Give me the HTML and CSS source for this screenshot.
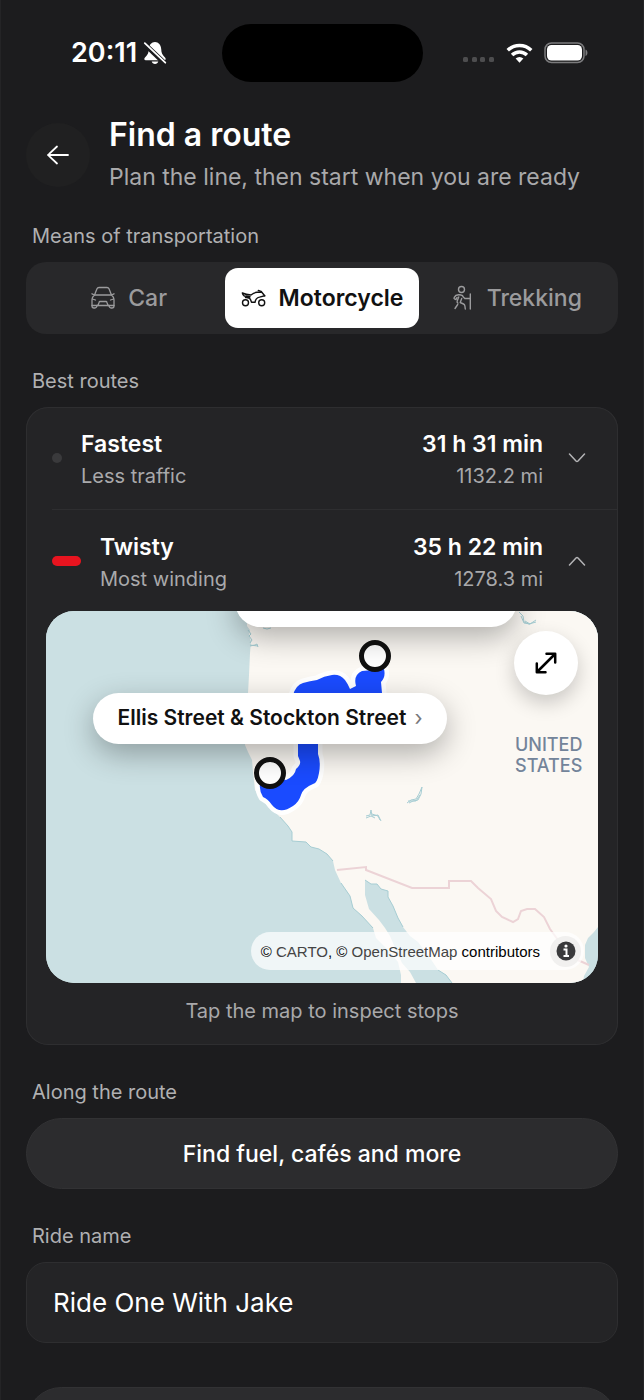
FILE: index.html
```html
<!DOCTYPE html>
<html lang="en">

<head>
    <meta charset="UTF-8">
    <meta name="viewport" content="width=device-width, initial-scale=1.0">
    <title>Find a route</title>
    <link rel="stylesheet" href="styles.css">
</head>

<body>

    <!-- Status bar -->
    <div class="status-bar">
        <div class="status-time">
            <span>20:11</span>
            <svg width="24" height="24" viewBox="0 0 24 24" fill="#fff">
                <path d="M12 1C8.500 1 6 4 5.800 8c-.2 4-1 5.800-3.800 8.500-1 1-1 2.800.8 2.800h18.400c1.800 0 1.800-1.800.8-2.800C19.200 13.800 18.400 12 18.200 8 18 4 15.500 1 12 1z" />
                <path d="M8.700 20.600h6.600c-.4 1.600-1.700 2.500-3.300 2.500s-2.900-.9-3.300-2.500z" />
                <path d="M1 2.500 22 22.500" stroke="#1c1c1e" stroke-width="5" />
                <path d="M1.800 2.200 22.300 21.700" stroke="#fff" stroke-width="1.800" stroke-linecap="round" />
            </svg>
        </div>
        <div class="island"></div>
        <div class="status-icons">
            <svg width="32" height="6" viewBox="0 0 32 6" fill="#4d4d4f">
                <rect width="5" height="5" rx="1.500" />
                <rect x="9" width="5" height="5" rx="1.500" />
                <rect x="17" width="5" height="5" rx="1.500" />
                <rect x="26" width="5" height="5" rx="1.500" />
            </svg>
            <svg width="27" height="20" viewBox="0 0 28 20" fill="none" stroke="#fff" stroke-width="3.600">
                <path d="M1.800 7.200a17.500 17.500 0 0 1 24.400 0" />
                <path d="M6.300 12.100a11 11 0 0 1 15.400 0" />
                <path d="M14 20l-4-4.200a5.800 5.800 0 0 1 8 0z" fill="#fff" stroke="none" />
            </svg>
            <svg width="44" height="22" viewBox="0 0 44 22">
                <rect x="1" y="1" width="39" height="19.500" rx="6.500" fill="none" stroke="#7b7b7d" stroke-width="1.500" />
                <rect x="3" y="3" width="35" height="15.500" rx="4.500" fill="#fff" />
                <path d="M41.500 7.500c2.600 1 2.600 5.500 0 6.500z" fill="#7b7b7d" />
            </svg>
        </div>
    </div>

    <!-- Page header -->
    <header class="page-header">
        <button class="back-btn" type="button" aria-label="Back">
            <svg width="24" height="24" viewBox="0 0 24 24" fill="none" stroke="#fff" stroke-width="1.800" stroke-linecap="round" stroke-linejoin="round">
                <path d="M22 12H2M11 3.500 3.200 10.800q-1.300 1.200 0 2.400L11 20.500" />
            </svg>
        </button>
        <div>
            <h1>Find a route</h1>
            <p>Plan the line, then start when you are ready</p>
        </div>
    </header>

    <main>
        <section>
            <h2>Means of transportation</h2>
            <div class="segmented">
                <button class="segment" type="button">
                    <svg width="26" height="26" viewBox="0 0 26 26" fill="none" stroke="currentColor" stroke-width="1.300" stroke-linejoin="round" stroke-linecap="round">
                        <path d="M4.500 10 7 3.800Q7.500 2.500 9 2.500h8q1.500 0 2 1.300L21.500 10" />
                        <path d="M2 8.800 4.500 10h17l2.500-1.200M4.500 10C2.500 11.500 2 13 2 15v6q0 2 2 2h1q1.600 0 2-2.500h12q.4 2.500 2 2.500h1q2 0 2-2v-6c0-2-.5-3.500-2.500-5" />
                        <path d="M2.300 14 5.500 15M23.700 14l-3.200 1M2 20.500h6l1-3Q9.300 16.500 10 16.500h6q.700 0 1 1l1 3h6" />
                    </svg>
                    Car
                </button>
                <button class="segment active" type="button" aria-pressed="true">
                    <svg width="26" height="26" viewBox="0 0 26 26" fill="none" stroke="currentColor" stroke-width="1.400" stroke-linejoin="round" stroke-linecap="round">
                        <circle cx="4.500" cy="17.700" r="3" />
                        <circle cx="20.700" cy="17.700" r="3" />
                        <path d="M1.300 8Q5 9.800 10 10q3-2.500 6-2.700h4.500M1.300 8q.4 2.300 2 3l5.700.8M4.500 12.500q4-.3 5 2l1 2.800H14q.5-4.300 4.500-5.200l5.200-1.300" />
                        <path d="M17.300 5.500 20 6.300l3.700 4.500" />
                    </svg>
                    Motorcycle
                </button>
                <button class="segment" type="button">
                    <svg width="26" height="26" viewBox="0 0 26 26" fill="none" stroke="currentColor" stroke-width="1.400" stroke-linejoin="round" stroke-linecap="round">
                        <circle cx="12.500" cy="4.500" r="3" />
                        <path d="m8 12.500-1 2-1.500-.7q-.8-.5-.3-1.300L7 10.300q2.500-1 5-.3 1.800.4 2.300 2l1.500 1.500h5.500" />
                        <path d="m12.700 13.500-1.500 4 3.300 1.500q1.200.6 1.400 2l.4 3M9.700 12l-1.500 4q-.5 1.500.7 2.200M8.700 19.500 6 23.500M21.300 9v15" />
                    </svg>
                    Trekking
                </button>
            </div>
        </section>

        <section>
            <h2>Best routes</h2>
            <div class="routes">
                <button class="route" type="button" aria-expanded="false">
                    <span class="marker"></span>
                    <span class="route-name"><strong>Fastest</strong><span>Less traffic</span></span>
                    <span class="route-stats"><strong>31 h 31 min</strong><span>1132.2 mi</span></span>
                    <svg width="18" height="10" viewBox="0 0 18 10" fill="none" stroke="#b4b4b6" stroke-width="1.500" stroke-linecap="round" stroke-linejoin="round">
                        <path d="m1.500 1 6.500 7q1 .8 2 0l6.500-7" />
                    </svg>
                </button>
                <button class="route selected" type="button" aria-expanded="true">
                    <span class="marker"></span>
                    <span class="route-name"><strong>Twisty</strong><span>Most winding</span></span>
                    <span class="route-stats"><strong>35 h 22 min</strong><span>1278.3 mi</span></span>
                    <svg width="18" height="10" viewBox="0 0 18 10" fill="none" stroke="#b4b4b6" stroke-width="1.500" stroke-linecap="round" stroke-linejoin="round">
                        <path d="m1.500 9 6.500-7q1-.8 2 0l6.500 7" />
                    </svg>
                </button>

                <!-- Route map -->
                <div class="map">
                    <svg class="map-canvas" viewBox="46 611 552 372" preserveAspectRatio="xMidYMid slice">
                        <rect x="46" y="611" width="552" height="372" fill="#cbe0e3" />
                        <path class="land" d="M247 611V626L250 630 249 636 251 641 250 653 249 675 248 693 245 745 248 752 252 760 253 772 255 790 262 800 275 812 280 817 288 826 292 832V841L306 842 311 847 319 849 327 854 333 861 335 870 341 883 350 896 353 908 362 916 373 928 376 938 388 950 398 962 401 975V983H416L410 972 402 963 396 950 390 936 385 928 379 920 369 909 365 895V880L371 884 377 884 381 889 388 891V897L393 906 398 918 403 927 410 936 418 942 430 958 438 970 446 975 452 983H583L584 976 589 967 585 958V945L588 938 594 932 598 927V611z" />
                        <g class="water">
                            <path d="M248 630l3 4-2 2 3 4-2 3M250 646l5-1 2-1 1 3M250 645l8 1M263 628l4 1 4-1" />
                            <path d="M519 612l4 4 1 6 5 2 7-2M521 616l3 7 6 1 6-4M525 621l5 3" />
                            <path d="M407 803l4-3 5-1 3-5 3-7-1 7-3 6-5 1-4 2M408 801l8 0 4-6" />
                            <path d="M366 816l4-1 1-5 1 6 6-1 3 6M366 818l5-2 4 2M372 814l6 2 2 4" />
                            <path d="M280 817 288 826 292 832V841L306 842 311 847 319 849 327 854 333 861M365 880L371 884 377 884 381 889 388 891V897L393 906 398 918 403 927M438 970L446 975 452 983M341 883L350 896 353 908 362 916 373 928" />
                        </g>
                        <path class="border-line" d="M337 870l29-3v3l46 18h37v-7h22l7 7 13 11 5 12 6 6 11 5 5-3 3-8 6-2h8l9 8 6 12 8 11 7 16 15 5 9 4" />
                        <path class="ride" d="M293 695Q296 685 303 683T317 680Q324 676 332 675T345 680Q348 684 350 689L356 686Q353 675 362 671L384 669Q386 677 381 682L382 693 381 703 318 711V754Q321 762 319 773T313 784Q303 788 301 795T293 806Q280 815 272 805 268 799 263 797 259 790 260 784V773L286 780Q295 776 296 769 301 765 300 761L298 756V720z" />
                        <g class="pins">
                            <circle cx="375" cy="656" r="13.500" />
                            <circle cx="270" cy="773" r="13.500" />
                        </g>
                    </svg>
                    <span class="country">UNITED STATES</span>
                    <span class="stop stop-end"></span>
                    <button class="stop stop-start" type="button">Ellis Street &amp; Stockton Street <span class="caret">›</span></button>
                    <button class="expand-btn" type="button" aria-label="Expand map">
                        <svg width="22" height="22" viewBox="0 0 22 22" fill="none" stroke="#000" stroke-width="2.500" stroke-linecap="round" stroke-linejoin="round">
                            <path d="M11.500 1.800h8.700v8.700M20 2 2 20M10.500 20.200H1.800v-8.700" />
                        </svg>
                    </button>
                    <div class="attribution">
                        <span>© <a href="#">CARTO</a>, © <a href="#">OpenStreetMap</a> contributors</span>
                        <button class="info-btn" type="button" aria-label="Attribution">
                            <svg width="20" height="20" viewBox="0 0 20 20">
                                <circle cx="10" cy="10" r="9.500" fill="#3a3a3c" />
                                <path d="M7.500 8.500h3V15M7.500 15h5.500" fill="none" stroke="#fff" stroke-width="2" />
                                <circle cx="10" cy="5" r="1.600" fill="#fff" />
                            </svg>
                        </button>
                    </div>
                </div>
                <p class="hint">Tap the map to inspect stops</p>
            </div>
        </section>

        <section>
            <h2>Along the route</h2>
            <button class="pill-btn" type="button">Find fuel, cafés and more</button>
        </section>

        <section>
            <label for="rideName">Ride name</label>
            <input id="rideName" type="text" value="Ride One With Jake">
        </section>

        <button class="pill-btn save-btn" type="button" aria-label="Save"></button>
    </main>

</body>

</html>
```
FILE: styles.css
```css
/* Reset */
* {
    box-sizing: border-box;
    margin: 0;
    padding: 0;
}

body {
    height: 100vh;
    overflow: hidden;
    font-family: 'Inter', sans-serif;
    background-color: #1c1c1e;
    color: #fff;
    border-left: 1px solid #242426;
    border-right: 1px solid #242426;
}

button,
input {
    font-family: inherit;
    color: inherit;
    border: none;
    background: none;
}

button {
    cursor: pointer;
}

svg {
    display: block;
    flex-shrink: 0;
}

/* Status bar */
.status-bar {
    display: grid;
    grid-template-columns: 1fr 201px 1fr;
    align-items: center;
    height: 105px;
}

.status-time {
    display: flex;
    align-items: center;
    gap: 6px;
    padding-left: 70px;
    font-size: 27px;
    font-weight: 600;
}

.island {
    height: 58px;
    border-radius: 29px;
    background: #000;
}

.status-icons {
    display: flex;
    align-items: center;
    justify-content: flex-end;
    gap: 11px;
    padding-right: 55px;
}

.status-icons svg:first-child {
    margin-top: 14px;
}

/* Header */
.page-header {
    display: flex;
    align-items: center;
    gap: 19px;
    padding: 8px 25px 11px;
}

.back-btn {
    display: flex;
    align-items: center;
    justify-content: center;
    width: 64px;
    height: 64px;
    border-radius: 50%;
    background: #202021;
}

h1 {
    font-size: 32px;
    line-height: 44px;
    font-weight: 600;
}

.page-header p {
    font-size: 23px;
    line-height: 40px;
    color: #a9a9ab;
}

/* Sections */
main {
    display: flex;
    flex-direction: column;
    gap: 35px;
    padding: 16px 25px 0;
}

h2,
label {
    display: block;
    margin: 0 6px 14px;
    font-size: 20px;
    line-height: 24px;
    font-weight: 400;
    color: #b0b0b2;
}

/* Transport switch */
.segmented {
    display: grid;
    grid-template-columns: repeat(3, 1fr);
    padding: 6px;
    border-radius: 20px;
    background: #28282a;
}

.segment {
    display: flex;
    align-items: center;
    justify-content: center;
    gap: 12px;
    height: 60px;
    border-radius: 13px;
    font-size: 23px;
    font-weight: 500;
    color: #9b9b9d;
}

.segment.active {
    background: #fff;
    color: #111;
    font-weight: 600;
}

/* Routes card */
.routes {
    border-radius: 22px;
    background: #242426;
    box-shadow: inset 0 0 0 1px #2e2e30;
}

.route {
    display: flex;
    align-items: center;
    width: calc(100% - 26px);
    height: 102px;
    margin-left: 26px;
    padding-right: 32px;
    text-align: left;
}

.route + .route {
    border-top: 1px solid #2e2e30;
}

.marker {
    width: 10px;
    height: 10px;
    margin-right: 19px;
    border-radius: 5px;
    background: #3a3a3c;
}

.selected .marker {
    width: 29px;
    background: #e8141f;
}

.route-name,
.route-stats {
    display: flex;
    flex-direction: column;
    padding-top: 4px;
    font-size: 20px;
    line-height: 32px;
    color: #a9a9ab;
}

.route-name {
    flex: 1;
}

.route-stats {
    margin-right: 25px;
    text-align: right;
}

.route strong {
    font-size: 23px;
    font-weight: 600;
    color: #fff;
}

/* Map */
.map {
    position: relative;
    height: 372px;
    margin: 0 20px;
    border-radius: 28px;
    overflow: hidden;
    background: #cbe0e3;
    color: #111;
}

.map-canvas {
    width: 100%;
    height: 100%;
}

.land {
    fill: #fbf8f3;
}

.water {
    fill: none;
    stroke: #a6cdd3;
    stroke-width: 1;
}

.border-line {
    fill: none;
    stroke: #ecd3d6;
    stroke-width: 2;
}

.ride {
    fill: #1a4bff;
    stroke: #fff;
    stroke-width: 9;
    stroke-linejoin: round;
    paint-order: stroke;
}

.pins {
    fill: #fff;
    stroke: #111;
    stroke-width: 5;
}

.country {
    position: absolute;
    top: 123px;
    right: 15px;
    width: 68px;
    font-size: 18px;
    line-height: 21px;
    font-weight: 500;
    color: #73849a;
}

.stop {
    position: absolute;
    display: flex;
    align-items: center;
    justify-content: center;
    height: 51px;
    padding-bottom: 2px;
    border-radius: 26px;
    background: #fff;
    box-shadow: 0 10px 30px rgba(0, 0, 0, 0.3);
    font-size: 21px;
    font-weight: 600;
    white-space: nowrap;
}

.stop-end {
    top: -35px;
    left: 189px;
    width: 282px;
}

.stop-start {
    top: 82px;
    left: 47px;
    width: 354px;
    gap: 8px;
}

.caret {
    font-weight: 400;
    color: #77777a;
}

.expand-btn {
    position: absolute;
    top: 20px;
    right: 20px;
    display: flex;
    align-items: center;
    justify-content: center;
    width: 64px;
    height: 64px;
    border-radius: 50%;
    background: #fff;
    box-shadow: 0 8px 20px rgba(0, 0, 0, 0.2);
}

.attribution {
    position: absolute;
    right: 14px;
    bottom: 13px;
    display: flex;
    align-items: center;
    gap: 10px;
    height: 38px;
    padding: 0 3px 0 10px;
    border-radius: 19px;
    background: rgba(255, 255, 255, 0.7);
    font-family: 'Liberation Sans', sans-serif;
    font-size: 15px;
    color: #000;
    white-space: nowrap;
}

.attribution a {
    color: #444;
    text-decoration: none;
}

.info-btn {
    display: flex;
    align-items: center;
    justify-content: center;
    width: 31px;
    height: 31px;
    border-radius: 50%;
    background: #f1f0ef;
}

.hint {
    padding: 12px 0 18px;
    font-size: 20px;
    line-height: 32px;
    text-align: center;
    color: #a9a9ab;
}

/* Controls */
.pill-btn {
    display: block;
    width: 100%;
    height: 71px;
    flex-shrink: 0;
    border: 1px solid #323234;
    border-radius: 36px;
    background: #2c2c2e;
    font-size: 23px;
    font-weight: 500;
}

.save-btn {
    margin-top: 9px;
}

input {
    display: block;
    width: 100%;
    height: 81px;
    padding: 0 26px;
    border: 1px solid #2e2e30;
    border-radius: 20px;
    background: #242426;
    font-size: 26px;
}
```
